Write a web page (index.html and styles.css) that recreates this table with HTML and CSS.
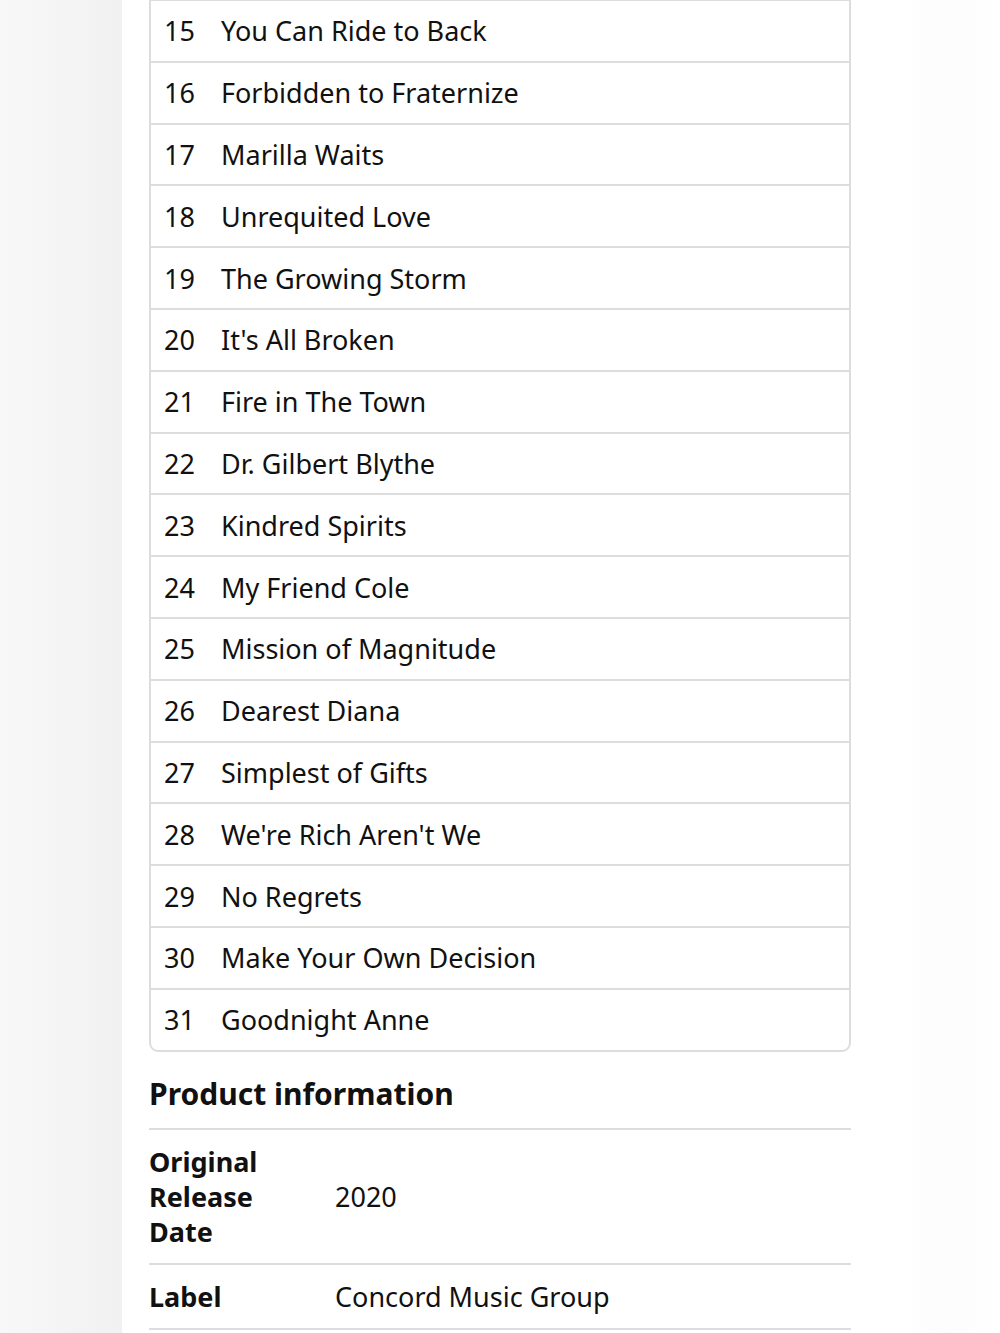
FILE: index.html
```html
<!DOCTYPE html>
<html>
    <head>
    <link rel="stylesheet" href="styles.css">
        <title>Tracks</title>
    </head>
    <body>
        <div class="page">
  <div class="content">
    <div class="track-list">
      <div class="track"><span class="track-num">15</span><span class="track-title">You Can Ride to Back</span></div>
      <div class="track"><span class="track-num">16</span><span class="track-title">Forbidden to Fraternize</span></div>
      <div class="track"><span class="track-num">17</span><span class="track-title">Marilla Waits</span></div>
      <div class="track"><span class="track-num">18</span><span class="track-title">Unrequited Love</span></div>
      <div class="track"><span class="track-num">19</span><span class="track-title">The Growing Storm</span></div>
      <div class="track"><span class="track-num">20</span><span class="track-title">It's All Broken</span></div>
      <div class="track"><span class="track-num">21</span><span class="track-title">Fire in The Town</span></div>
      <div class="track"><span class="track-num">22</span><span class="track-title">Dr. Gilbert Blythe</span></div>
      <div class="track"><span class="track-num">23</span><span class="track-title">Kindred Spirits</span></div>
      <div class="track"><span class="track-num">24</span><span class="track-title">My Friend Cole</span></div>
      <div class="track"><span class="track-num">25</span><span class="track-title">Mission of Magnitude</span></div>
      <div class="track"><span class="track-num">26</span><span class="track-title">Dearest Diana</span></div>
      <div class="track"><span class="track-num">27</span><span class="track-title">Simplest of Gifts</span></div>
      <div class="track"><span class="track-num">28</span><span class="track-title">We're Rich Aren't We</span></div>
      <div class="track"><span class="track-num">29</span><span class="track-title">No Regrets</span></div>
      <div class="track"><span class="track-num">30</span><span class="track-title">Make Your Own Decision</span></div>
      <div class="track"><span class="track-num">31</span><span class="track-title">Goodnight Anne</span></div>
    </div>

    <h2 class="info-heading">Product information</h2>
    <div class="info-table">
      <div class="info-row">
        <div class="info-label">Original Release Date</div>
        <div class="info-value">2020</div>
      </div>
      <div class="info-row">
        <div class="info-label">Label</div>
        <div class="info-value">Concord Music Group</div>
      </div>
    </div>
  </div>
</div>
    </body>
</html>
```

FILE: styles.css
```css
html, body {
  margin: 0;
  padding: 0;
}

body {
  font-family: "Noto Sans", "Open Sans", sans-serif;
  color: #111;
  background: #fff;
}

.page {
  min-height: 1333px;
  padding-left: 122px;
  background: linear-gradient(to right, #f8f8f8 0, #f1f1f1 122px, #fff 122px, #fff 900px, #fcfcfc 950px, #fff 1000px);
}

.content {
  background: #fff;
  padding-left: 27px;
  width: 702px;
  overflow: hidden;
  height: 1333px;
}

.track-list {
  margin-top: -1px;
  border: 2px solid #dddddd;
  border-radius: 0 0 9px 9px;
}

.track {
  display: flex;
  align-items: center;
  height: 59.8px;
  border-bottom: 2px solid #dddddd;
  font-size: 27px;
  padding-left: 13px;
}

.track:last-child {
  border-bottom: none;
}

.track-num {
  width: 57px;
}

.info-heading {
  margin: 22px 0 0;
  font-size: 30px;
  font-weight: 700;
  line-height: 40px;
  padding-bottom: 14px;
  border-bottom: 2px solid #dddddd;
}

.info-row {
  display: flex;
  align-items: center;
  border-bottom: 2px solid #dddddd;
  padding: 14px 0;
  font-size: 27px;
  line-height: 35px;
}

.info-label {
  width: 120px;
  margin-right: 66px;
  font-weight: 700;
}
```
